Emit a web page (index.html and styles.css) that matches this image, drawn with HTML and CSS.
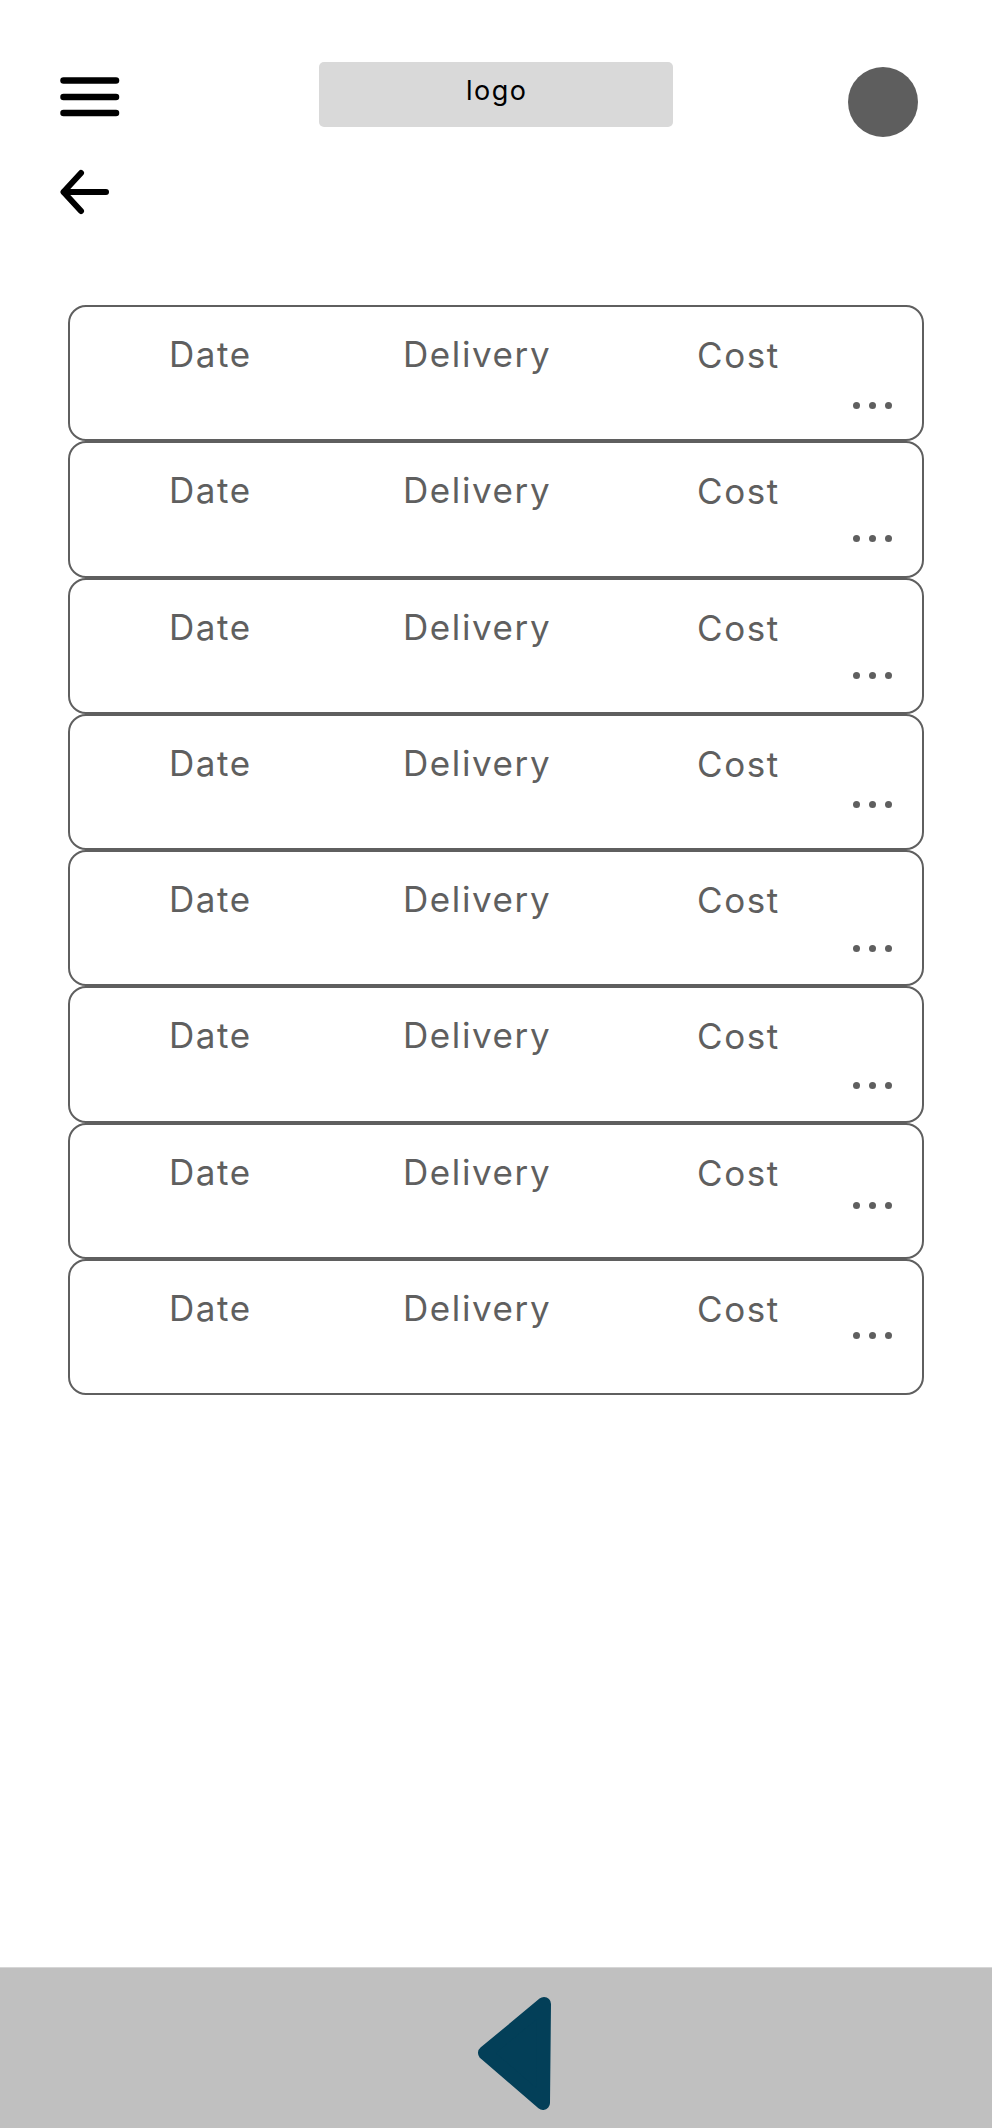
FILE: index.html
```html
<!DOCTYPE html>
<html lang="en">
<head>
<meta charset="utf-8">
<title>Deliveries</title>
<link rel="stylesheet" href="styles.css">
</head>
<body>
<div class="page">
  <header class="topbar">
    <button class="menu-btn" aria-label="Menu">
      <svg width="60" height="42" viewBox="0 0 60 42"><g stroke="#000" stroke-width="6.5" stroke-linecap="round"><line x1="3.5" y1="3.5" x2="56" y2="3.5"/><line x1="3.5" y1="20" x2="56" y2="20"/><line x1="3.5" y1="36" x2="56" y2="36"/></g></svg>
    </button>
    <div class="logo">logo</div>
    <div class="avatar"></div>
  </header>

  <div class="back-row">
    <svg class="back" width="52" height="48" viewBox="0 0 52 48"><g fill="none" stroke="#000" stroke-width="6" stroke-linecap="round" stroke-linejoin="round"><line x1="6" y1="24" x2="48" y2="24"/><polyline points="23,5 5.5,24 23,43"/></g></svg>
  </div>

  <ul class="list">
    <li class="card"><div class="row"><span class="c-date">Date</span><span class="c-del">Delivery</span><span class="c-cost">Cost</span></div><div class="dots"><i></i><i></i><i></i></div></li>
    <li class="card"><div class="row"><span class="c-date">Date</span><span class="c-del">Delivery</span><span class="c-cost">Cost</span></div><div class="dots"><i></i><i></i><i></i></div></li>
    <li class="card"><div class="row"><span class="c-date">Date</span><span class="c-del">Delivery</span><span class="c-cost">Cost</span></div><div class="dots"><i></i><i></i><i></i></div></li>
    <li class="card"><div class="row"><span class="c-date">Date</span><span class="c-del">Delivery</span><span class="c-cost">Cost</span></div><div class="dots"><i></i><i></i><i></i></div></li>
    <li class="card"><div class="row"><span class="c-date">Date</span><span class="c-del">Delivery</span><span class="c-cost">Cost</span></div><div class="dots"><i></i><i></i><i></i></div></li>
    <li class="card"><div class="row"><span class="c-date">Date</span><span class="c-del">Delivery</span><span class="c-cost">Cost</span></div><div class="dots"><i></i><i></i><i></i></div></li>
    <li class="card"><div class="row"><span class="c-date">Date</span><span class="c-del">Delivery</span><span class="c-cost">Cost</span></div><div class="dots"><i></i><i></i><i></i></div></li>
    <li class="card"><div class="row"><span class="c-date">Date</span><span class="c-del">Delivery</span><span class="c-cost">Cost</span></div><div class="dots"><i></i><i></i><i></i></div></li>
  </ul>

  <nav class="bottombar">
    <svg class="nav-back" width="78" height="116" viewBox="0 0 78 116"><polygon points="67,8 8,57 66,107" fill="#033f58" stroke="#033f58" stroke-width="14" stroke-linejoin="round"/></svg>
  </nav>
</div>
</body>
</html>
```

FILE: styles.css
```css
* { box-sizing: border-box; }

html, body {
  margin: 0;
  padding: 0;
  background: #ffffff;
}

body {
  font-family: Inter, "Noto Sans", "Liberation Sans", sans-serif;
  color: #000;
}

.page {
  min-height: 100vh;
  display: flex;
  flex-direction: column;
}

.topbar {
  display: grid;
  grid-template-columns: 1fr auto 1fr;
  align-items: start;
  padding: 0 60px;
  height: 137px;
}

.menu-btn {
  justify-self: start;
  margin-top: 77px;
  padding: 0;
  border: 0;
  background: none;
  display: block;
  line-height: 0;
}

.logo {
  margin-top: 62px;
  width: 354px;
  height: 65px;
  background: #d9d9d9;
  border-radius: 5px;
  display: flex;
  justify-content: center;
  padding: 15px 0 0 1.5px;
  font-size: 27px;
  line-height: 1;
  letter-spacing: 1.5px;
  color: #000;
}

.avatar {
  justify-self: end;
  margin: 67px 14px 0 0;
  width: 70px;
  height: 70px;
  border-radius: 50%;
  background: #5e5e5e;
}

.back-row {
  padding: 31px 0 0 58px;
  line-height: 0;
}

.back { display: block; }

.list {
  list-style: none;
  margin: 89px 68px 0;
  padding: 0;
  display: flex;
  flex-direction: column;
}

.card {
  height: 136.25px;
  border: 2px solid #5f5f5f;
  border-radius: 18px;
  display: flex;
  flex-direction: column;
}

.row {
  display: grid;
  grid-template-columns: 234px 294px auto;
  padding: 30px 0 0 99px;
  font-size: 35px;
  line-height: 35px;
  letter-spacing: 1.6px;
  color: #5f5f5f;
}

.c-cost { position: relative; top: 1px; }

.dots {
  display: flex;
  justify-content: flex-end;
  gap: 9px;
  padding-right: 30.5px;
  margin-top: 30px;
}

.dots i {
  display: block;
  width: 7px;
  height: 7px;
  border-radius: 50%;
  background: #5f5f5f;
}

.card:nth-child(2) .dots { margin-top: 27px; }
.card:nth-child(3) .dots { margin-top: 27px; }
.card:nth-child(4) .dots { margin-top: 20px; }
.card:nth-child(5) .dots { margin-top: 28px; }
.card:nth-child(6) .dots { margin-top: 29px; }
.card:nth-child(7) .dots { margin-top: 12px; }
.card:nth-child(8) .dots { margin-top: 6px; }

.bottombar {
  margin-top: auto;
  height: 161px;
  background: #c0c0c0;
  border-top: 1px solid #d6d6d6;
  display: flex;
  justify-content: center;
  align-items: flex-start;
  padding-top: 28px;
}

.nav-back {
  display: block;
  margin-left: 40px;
}
```
